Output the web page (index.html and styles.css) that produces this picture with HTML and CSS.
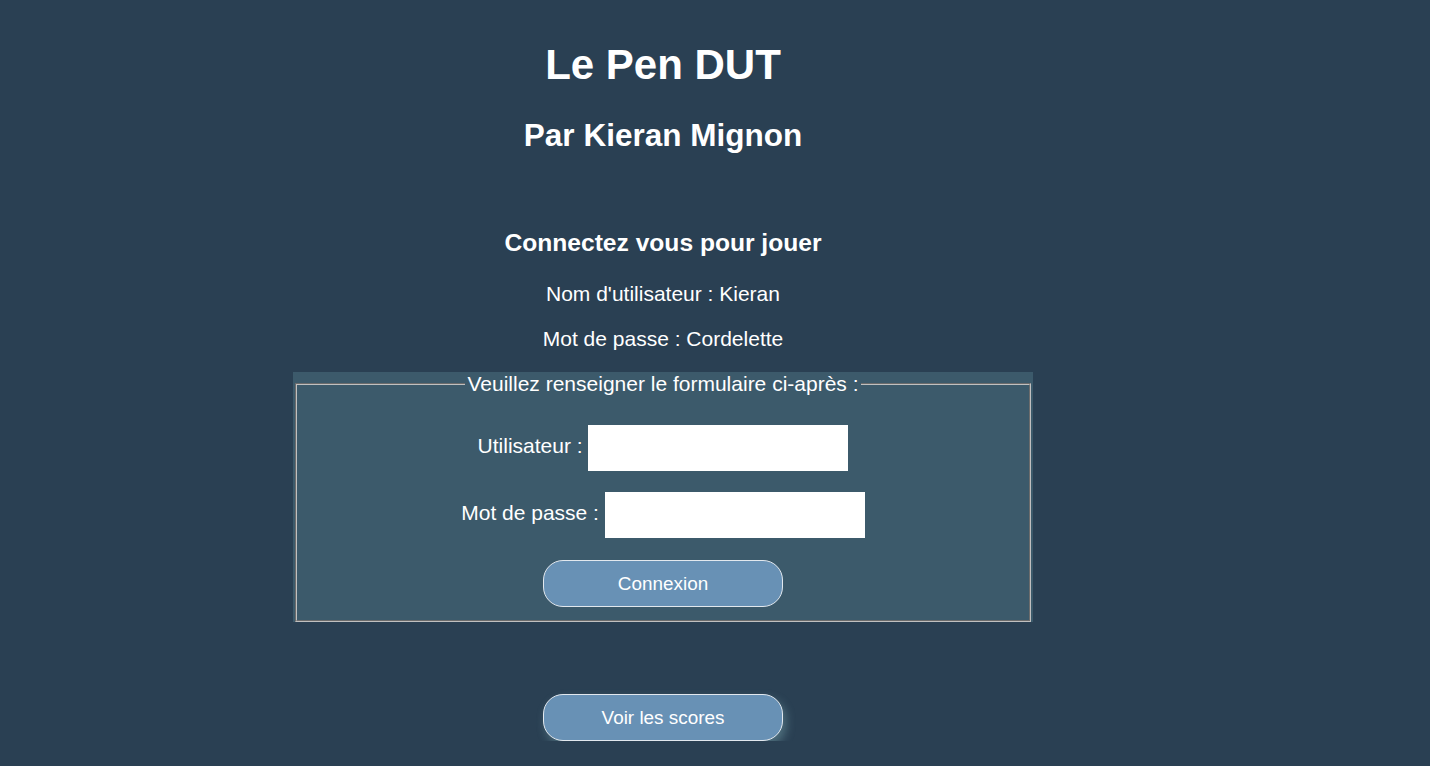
FILE: index.html
```html
<!DOCTYPE html>
<html lang="fr">
<head>
<meta charset="utf-8">
<title>Le Pen DUT</title>
<link rel="stylesheet" href="styles.css">
</head>
<body>
<div class="page">
  <h1 class="title">Le Pen DUT</h1>
  <h2 class="subtitle">Par Kieran Mignon</h2>
  <h3 class="prompt">Connectez vous pour jouer</h3>
  <p class="info">Nom d'utilisateur : Kieran</p>
  <p class="info">Mot de passe : Cordelette</p>
  <form class="login">
    <fieldset class="login-set">
      <legend class="login-legend">Veuillez renseigner le formulaire ci-après :</legend>
      <p class="row"><label for="user">Utilisateur :</label> <input class="field" id="user" type="text"></p>
      <p class="row"><label for="pass">Mot de passe :</label> <input class="field" id="pass" type="password"></p>
      <div class="actions"><button class="btn" type="button">Connexion</button></div>
    </fieldset>
  </form>
  <div class="scores"><button class="btn btn-glow" type="button">Voir les scores</button></div>
</div>
</body>
</html>
```

FILE: styles.css
```css
html, body {
  margin: 0;
  padding: 0;
  background: #2a4053;
}

body {
  font-family: "Liberation Sans", Arial, sans-serif;
  font-size: 21px;
  color: #ffffff;
}

.page {
  width: 1310px;
  margin-left: 8px;
  padding-top: 41px;
  text-align: center;
}

.title {
  font-size: 42px;
  font-weight: bold;
  margin: 0 0 28px;
}

.subtitle {
  font-size: 31.5px;
  font-weight: bold;
  margin: 0 0 75px;
}

.prompt {
  font-size: 24.6px;
  font-weight: bold;
  margin: 0 0 25px;
}

.info {
  margin: 0 0 21px;
}

.login {
  width: 740px;
  margin: 0 auto;
  background: #3c5a6b;
}

.login-set {
  margin: 0 2px;
  padding: 8px 0.75em 0.625em;
  border: 2px groove #c0c0c0;
}

.login-legend {
  margin: 0 auto;
  padding: 0 2px;
}

.row {
  margin: 21px 0 0;
}

.field {
  width: 260px;
  height: 46px;
  box-sizing: border-box;
  border: none;
  background: #ffffff;
  font-size: 13.33px;
  vertical-align: baseline;
}

.actions {
  margin-top: 22px;
}

.btn {
  display: block;
  margin: 0 auto;
  width: 240px;
  height: 47px;
  border: 1px solid #e2e8ee;
  border-radius: 20px;
  background: #6891b5;
  color: #ffffff;
  font-family: "Liberation Sans", Arial, sans-serif;
  font-size: 18.9px;
}

.scores {
  margin-top: 72px;
}

.btn-glow {
  box-shadow: 3px 5px 10px rgba(150, 200, 205, 0.35);
}
```
